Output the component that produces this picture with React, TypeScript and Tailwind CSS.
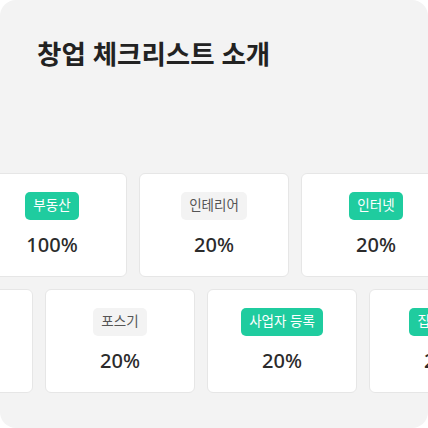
const rowOne = [
  { label: "창업 준비", percent: "20%", done: false },
  { label: "부동산", percent: "100%", done: true },
  { label: "인테리어", percent: "20%", done: false },
  { label: "인터넷", percent: "20%", done: true },
];

const rowTwo = [
  { label: "메뉴 구성", percent: "20%", done: false },
  { label: "포스기", percent: "20%", done: false },
  { label: "사업자 등록", percent: "20%", done: true },
  { label: "집기 구매", percent: "20%", done: true },
];

type Item = { label: string; percent: string; done: boolean };

function ChecklistCard({ item }: { item: Item }) {
  return (
    <div className="flex h-[104px] w-[150px] shrink-0 flex-col items-center justify-center gap-[11px] rounded-md border border-[#e6e6e6] bg-white">
      <span
        className={
          item.done
            ? "flex h-[28px] items-center rounded-[5px] bg-[#1fcc9f] px-[8px] text-[13.5px] text-white"
            : "flex h-[28px] items-center rounded-[5px] bg-[#f3f3f3] px-[8px] text-[13.5px] text-[#555555]"
        }
      >
        {item.label}
      </span>
      <span className="text-[20px] leading-[28px] font-medium text-[#2b2b2b]">
        {item.percent}
      </span>
    </div>
  );
}

export default function App() {
  return (
    <div
      className="h-[428px] w-[428px] bg-white"
      style={{ fontFamily: '"Noto Sans", "Noto Sans CJK KR", sans-serif' }}
    >
      <div className="h-full w-full overflow-hidden rounded-2xl bg-[#f3f3f3]">
        <h1 className="pl-[37px] pt-[37px] text-[26.5px] leading-[34px] font-bold text-[#222222]">
          창업 체크리스트 소개
        </h1>

        {/* Scrolling checklist rows */}
        <div className="mt-[102px] flex flex-col gap-[12px]">
          <div className="ml-[-185px] flex gap-[12px]">
            {rowOne.map((item) => (
              <ChecklistCard key={item.label} item={item} />
            ))}
          </div>
          <div className="ml-[-117px] flex gap-[12px]">
            {rowTwo.map((item) => (
              <ChecklistCard key={item.label} item={item} />
            ))}
          </div>
        </div>
      </div>
    </div>
  );
}
